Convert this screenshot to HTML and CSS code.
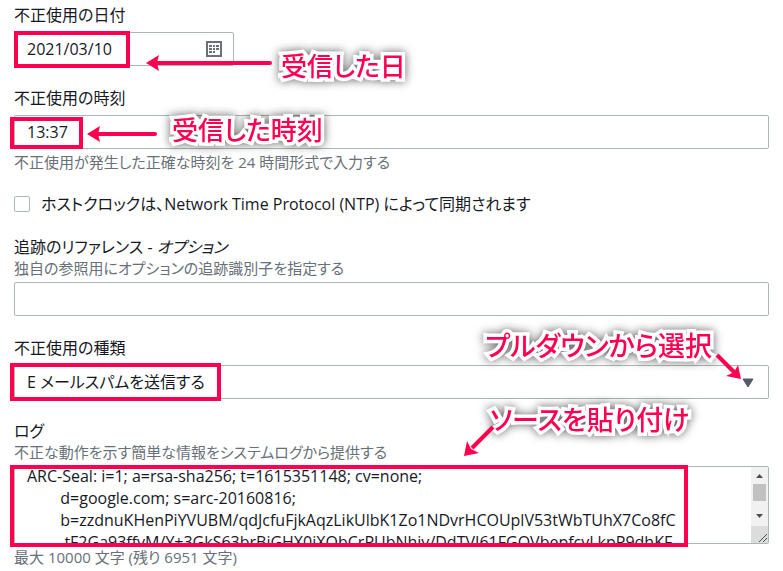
FILE: index.html
```html
<!DOCTYPE html>
<html lang="ja">
<head>
    <meta charset="UTF-8">
    <meta name="viewport" content="width=device-width, initial-scale=1.0">
    <title>不正使用の報告</title>
    <link rel="stylesheet" href="styles.css">
</head>
<body>
    <form class="report-form">
        <div class="form-group">
            <label for="abuseDate">不正使用の日付</label>
            <div class="control date-control">
                <input type="text" id="abuseDate" value="2021/03/10">
                <svg class="calendar-icon" viewBox="0 0 16 16" width="16" height="16" aria-hidden="true">
                    <rect x="1" y="1" width="14" height="14" fill="#fff" stroke="#687078" stroke-width="2"/>
                    <path d="M3 4h3v2H3zM7 4h2v2H7zM10 4h3v2h-3zM3 7h3v2H3zM7 7h2v2H7zM10 7h3v2h-3zM3 10h3v2H3zM7 10h2v2H7z" fill="#687078"/>
                </svg>
                <span class="mark mark-date"></span>
                <svg class="arrow arrow-date" viewBox="0 0 128 16" width="128" height="16" aria-hidden="true">
                    <path d="M10 8H124" stroke="#ff0050" stroke-width="4" stroke-linecap="round"/>
                    <path d="M0 8L13 0L11 8L13 16Z" fill="#ff0050"/>
                </svg>
                <span class="note note-date">受信した日</span>
            </div>
        </div>

        <div class="form-group">
            <label for="abuseTime">不正使用の時刻</label>
            <div class="control">
                <input type="text" id="abuseTime" value="13:37">
                <span class="mark mark-time"></span>
                <svg class="arrow arrow-time" viewBox="0 0 72 16" width="72" height="16" aria-hidden="true">
                    <path d="M10 8H68" stroke="#ff0050" stroke-width="4" stroke-linecap="round"/>
                    <path d="M0 8L13 0L11 8L13 16Z" fill="#ff0050"/>
                </svg>
                <span class="note note-time">受信した時刻</span>
            </div>
            <p class="hint">不正使用が発生した正確な時刻を 24 時間形式で入力する</p>
        </div>

        <div class="form-group check-group">
            <input type="checkbox" id="ntp">
            <label for="ntp">ホストクロックは、Network Time Protocol (NTP) によって同期されます</label>
        </div>

        <div class="form-group">
            <label for="reference">追跡のリファレンス - <em>オプション</em></label>
            <p class="description">独自の参照用にオプションの追跡識別子を指定する</p>
            <div class="control">
                <input type="text" id="reference">
            </div>
        </div>

        <div class="form-group">
            <label for="abuseType">不正使用の種類</label>
            <div class="control">
                <select id="abuseType">
                    <option>E メールスパムを送信する</option>
                </select>
                <svg class="caret" viewBox="0 0 12 10" width="12" height="10" aria-hidden="true">
                    <path d="M1 1H11L6 9Z" fill="#545b64" stroke="#545b64" stroke-linejoin="round"/>
                </svg>
                <span class="mark mark-type"></span>
                <svg class="arrow arrow-type" viewBox="0 0 28 28" width="28" height="28" aria-hidden="true">
                    <path d="M2 2L20 20" stroke="#ff0050" stroke-width="4"/>
                    <path d="M26 26L11 23L19 19L23 12Z" fill="#ff0050"/>
                </svg>
                <span class="note note-type">プルダウンから選択</span>
            </div>
        </div>

        <div class="form-group">
            <label for="log">ログ</label>
            <p class="description">不正な動作を示す簡単な情報をシステムログから提供する</p>
            <div class="control">
                <textarea id="log">ARC-Seal: i=1; a=rsa-sha256; t=1615351148; cv=none;
        d=google.com; s=arc-20160816;
        b=zzdnuKHenPiYVUBM/qdJcfuFjkAqzLikUlbK1Zo1NDvrHCOUplV53tWbTUhX7Co8fC
         tF2Ga93ffyM/Y+3GkS63brBiGHX0iXQbCrPUbNhiy/DdTVI61FGQVbepfcyLkpP9dhKF</textarea>
                <svg class="scrollbar" viewBox="0 0 17 76" width="17" height="76" aria-hidden="true">
                    <rect width="17" height="59" fill="#f1f1f1"/>
                    <path d="M5 11L8.500 7L12 11Z" fill="#505050"/>
                    <rect x="2" y="17" width="13" height="17" fill="#c1c1c1"/>
                    <path d="M5 47L8.500 51L12 47Z" fill="#505050"/>
                    <rect y="59" width="17" height="17" fill="#dcdcdc"/>
                    <path d="M8 75L16 67M12 75L16 71" stroke="#505050"/>
                </svg>
                <span class="mark mark-log"></span>
                <svg class="arrow arrow-log" viewBox="0 0 32 32" width="32" height="32" aria-hidden="true">
                    <path d="M30 2L9 23" stroke="#ff0050" stroke-width="4"/>
                    <path d="M1 31L4 16L8 24L16 28Z" fill="#ff0050"/>
                </svg>
                <span class="note note-log">ソースを貼り付け</span>
            </div>
            <p class="hint">最大 10000 文字 (残り 6951 文字)</p>
        </div>
    </form>

    <script>
        // the log is scrolled down a little
        document.getElementById('log').scrollTop = 2;
    </script>
</body>
</html>
```
FILE: styles.css
```css
* {
    box-sizing: border-box;
}
body {
    margin: 0;
    background: #fff;
    color: #16191f;
    font-family: "Open Sans", "Noto Sans CJK JP", sans-serif;
    font-size: 16px;
    line-height: 22px;
    font-feature-settings: "palt";
    overflow: hidden;
}
.report-form {
    display: flex;
    flex-direction: column;
    gap: 21px;
    padding: 4px 14px 0;
}
.form-group label {
    display: block;
}
.control {
    position: relative;
    margin-top: 6px;
}
.date-control {
    width: 220px;
}
.hint,
.description {
    margin: 0;
    color: #687078;
    font-size: 15px;
    line-height: 20px;
}
.hint {
    margin-top: 3px;
}
.description + .control {
    margin-top: 4px;
}
input[type="text"],
select,
textarea {
    display: block;
    width: 100%;
    height: 34px;
    margin: 0;
    padding: 0 12px;
    border: 1px solid #aab7b8;
    border-radius: 2px;
    background: #fff;
    color: #16191f;
    font: inherit;
    font-feature-settings: inherit;
}
select {
    appearance: none;
}
textarea {
    height: 78px;
    white-space: pre;
    overflow-x: hidden;
    overflow-y: scroll;
    resize: vertical;
}
.scrollbar {
    position: absolute;
    top: 1px;
    right: 1px;
    pointer-events: none;
}
.check-group {
    display: flex;
    align-items: center;
    gap: 11px;
}
.check-group input {
    appearance: none;
    width: 16px;
    height: 16px;
    margin: 0;
    border: 1px solid #aab7b8;
    border-radius: 2px;
    background: #fff;
}
.calendar-icon {
    position: absolute;
    top: 9px;
    right: 12px;
}
.caret {
    position: absolute;
    top: 13px;
    right: 15px;
}

/* annotations over the form */
.mark {
    position: absolute;
    border: 4px solid #ff0050;
    pointer-events: none;
}
.mark-date {
    top: -1px;
    left: 0;
    width: 116px;
    height: 37px;
}
.mark-time {
    top: 2px;
    left: -4px;
    width: 73px;
    height: 32px;
}
.mark-type {
    top: -2px;
    left: -4px;
    width: 211px;
    height: 38px;
}
.mark-log {
    top: -1px;
    left: -4px;
    width: 678px;
    height: 82px;
}
.arrow {
    position: absolute;
    z-index: 2;
}
.arrow-date {
    top: 23px;
    left: 132px;
}
.arrow-time {
    top: 11px;
    left: 73px;
}
.arrow-type {
    top: -12px;
    right: 26px;
}
.arrow-log {
    top: -41px;
    left: 449px;
}
.note {
    position: absolute;
    z-index: 1;
    color: #ff0050;
    font-family: "Noto Sans CJK JP", sans-serif;
    font-size: 26px;
    font-weight: 500;
    line-height: 30px;
    white-space: nowrap;
    -webkit-text-stroke: 7px #fff;
    paint-order: stroke fill;
    filter: drop-shadow(0 0 5px rgba(0, 0, 0, 0.6));
}
.note-date {
    top: 18px;
    left: 267px;
}
.note-time {
    top: -1px;
    left: 158px;
}
.note-type {
    top: -35px;
    right: 57px;
    font-size: 27px;
}
.note-log {
    top: -62px;
    left: 476px;
    font-size: 27px;
}
```
